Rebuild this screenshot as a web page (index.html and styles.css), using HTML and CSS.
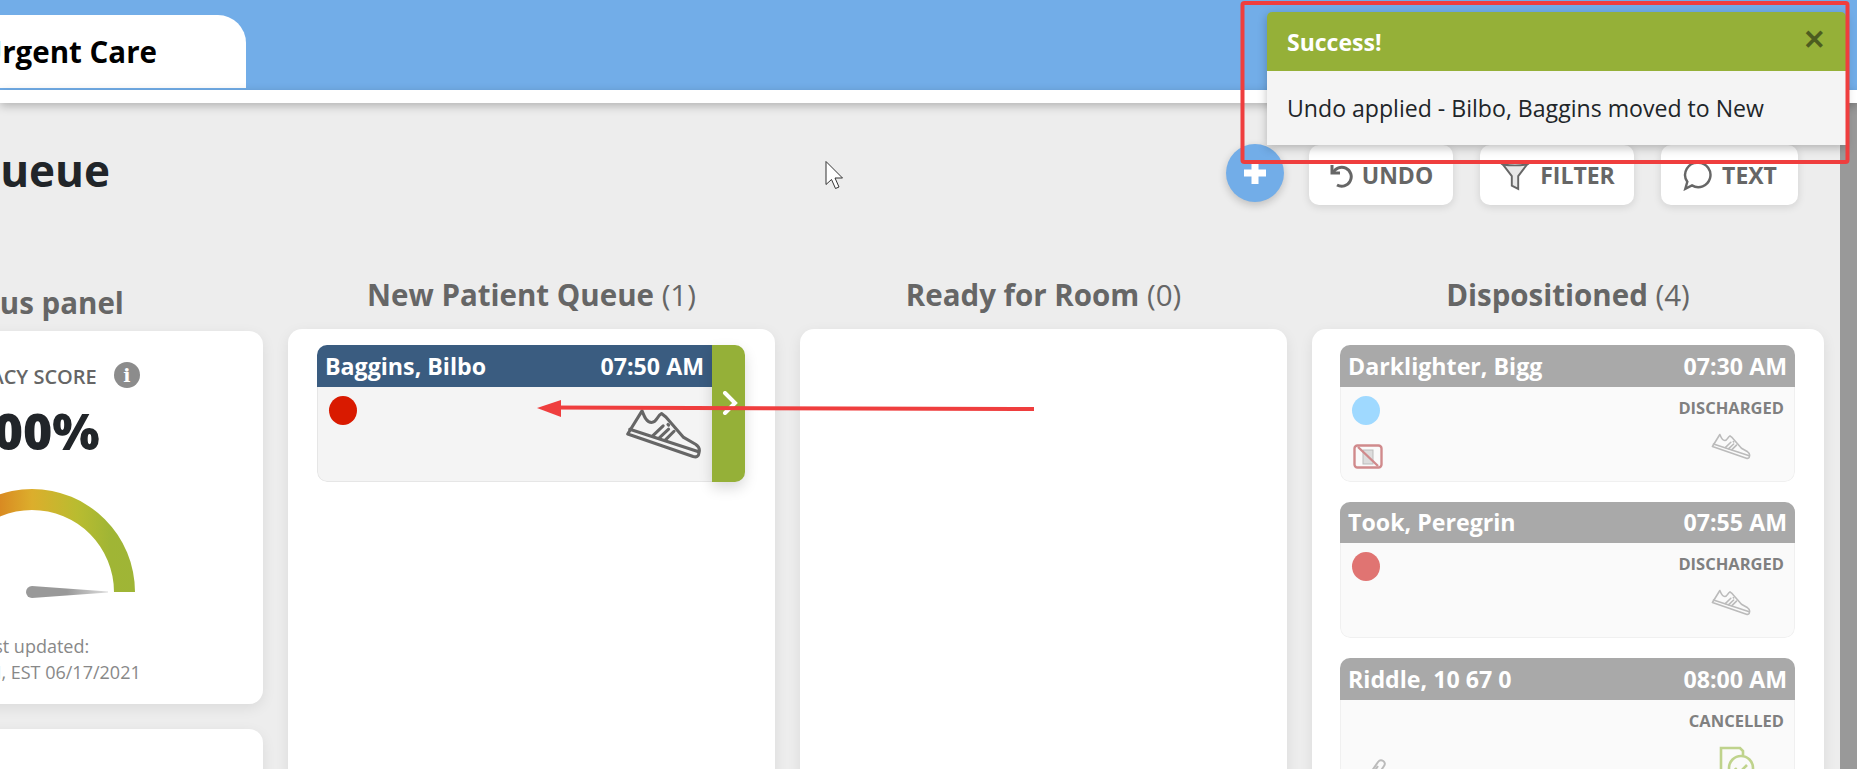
FILE: index.html
```html
<!DOCTYPE html>
<html lang="en">
<head>
    <meta charset="UTF-8">
    <meta name="viewport" content="width=device-width, initial-scale=1.0">
    <title>Patient Queue</title>
    <link rel="stylesheet" href="styles.css">
</head>
<body>
    <svg class="defs" width="0" height="0">
        <symbol id="shoe" viewBox="78 84 226 152">
            <g fill="none" stroke="currentColor" stroke-width="9" stroke-linejoin="round" stroke-linecap="round">
                <path d="M86 160 L128 92 C136 112 142 126 156 126 C172 126 172 106 185 100 L198 110 L250 170 L285 190 C296 197 298 206 295 216 C294 226 288 229 278 226 Z"/>
                <path d="M92 146 L294 212"/>
                <path d="M160 165 L190 136 M178 172 L206 146 M196 178 L222 152"/>
                <path d="M204 132 L206 134"/>
            </g>
        </symbol>
    </svg>

    <header class="topbar">
        <div class="tab">Urgent Care</div>
    </header>
    <div class="topbar-strip"></div>

    <div class="page">
        <main class="view">
            <div class="board">
                <div class="title-row">
                    <h1>Patient Queue</h1>
                    <div class="actions">
                        <button class="add-btn">
                            <svg width="26" height="26" viewBox="0 0 26 26"><path d="M13 2v22M2 13h22" stroke="#fff" stroke-width="7"/></svg>
                        </button>
                        <button class="btn btn-undo">
                            <svg width="24" height="26" viewBox="0 0 24 26" fill="none" stroke="#666" stroke-width="3"><path d="M3 3v8h8"/><path d="M4 11A9.500 9.500 0 1 1 8 23"/></svg>
                            UNDO
                        </button>
                        <button class="btn btn-filter">
                            <svg width="32" height="32" viewBox="0 0 30 30" fill="#e8e8e8" stroke="#666" stroke-width="1.800"><path d="M2 3h26L18 16v12l-6-3v-9z"/><ellipse cx="15" cy="4" rx="13" ry="2" fill="#fff"/></svg>
                            FILTER
                        </button>
                        <button class="btn btn-text">
                            <svg width="31" height="31" viewBox="0 0 28 28" fill="none" stroke="#666" stroke-width="2.200"><path d="M15 2.500a11 11 0 1 1-6 20.400L3 26l1.800-6.300A11 11 0 0 1 15 2.500z"/></svg>
                            TEXT
                        </button>
                    </div>
                </div>

                <div class="columns">
                    <section class="side">
                        <h2 class="side-head">Status panel</h2>
                        <div class="panel score-panel">
                            <div class="score-label">ACCURACY SCORE <span class="info">i</span></div>
                            <div class="score">100%</div>
                            <svg class="gauge" width="228" height="122" viewBox="0 0 228 122">
                                <defs>
                                    <linearGradient id="gaugeFill" x1="0" x2="1" y1="0" y2="0">
                                        <stop offset="0" stop-color="#d9261c"/>
                                        <stop offset="0.3" stop-color="#d8801f"/>
                                        <stop offset="0.5" stop-color="#dcae2c"/>
                                        <stop offset="0.72" stop-color="#b9bc30"/>
                                        <stop offset="0.88" stop-color="#a0b535"/>
                                        <stop offset="1" stop-color="#9fb536"/>
                                    </linearGradient>
                                    <linearGradient id="needleFill" x1="0" x2="1" y1="0" y2="0">
                                        <stop offset="0.5" stop-color="#999"/>
                                        <stop offset="1" stop-color="#ddd"/>
                                    </linearGradient>
                                </defs>
                                <path d="M11 114A103 103 0 0 1 217 114h-21A82 82 0 0 0 32 114z" fill="url(#gaugeFill)"/>
                                <path d="M114 108L190 113.500v1L114 120a6 6 0 0 1 0-12z" fill="url(#needleFill)"/>
                            </svg>
                            <div class="updated">Last updated:<br>07:50 AM, EST 06/17/2021</div>
                        </div>
                        <div class="panel next-panel"></div>
                    </section>

                    <section class="col">
                        <h2 class="col-head"><b>New Patient Queue</b> (1)</h2>
                        <div class="panel col-body col-new">
                            <div class="card active">
                                <div class="card-main">
                                    <div class="card-head"><span>Baggins, Bilbo</span><span>07:50 AM</span></div>
                                    <div class="card-body">
                                        <div class="card-left"><span class="dot dot-red"></span></div>
                                        <div class="card-right">
                                            <svg class="shoe-big"><use href="#shoe"/></svg>
                                        </div>
                                    </div>
                                </div>
                                <div class="card-next">
                                    <svg width="16" height="24" viewBox="0 0 16 24" fill="none" stroke="#fff" stroke-width="4" stroke-linecap="round"><path d="M3 2l10 10L3 22"/></svg>
                                </div>
                            </div>
                        </div>
                    </section>

                    <section class="col">
                        <h2 class="col-head"><b>Ready for Room</b> (0)</h2>
                        <div class="panel col-body"></div>
                    </section>

                    <section class="col">
                        <h2 class="col-head"><b>Dispositioned</b> (4)</h2>
                        <div class="panel col-body col-done">
                            <div class="card done">
                                <div class="card-main">
                                    <div class="card-head"><span>Darklighter, Bigg</span><span>07:30 AM</span></div>
                                    <div class="card-body">
                                        <div class="card-left">
                                            <span class="dot dot-blue"></span>
                                            <svg class="flag-icon" width="30" height="25" viewBox="0 0 30 25"><rect x="1.500" y="1.500" width="27" height="22" rx="3" fill="none" stroke="#d08a8c" stroke-width="2.400"/><rect x="10" y="6" width="10" height="14" fill="#ddd" stroke="#bbb"/><path d="M5 3l20 19" stroke="#d08a8c" stroke-width="2.400"/></svg>
                                        </div>
                                        <div class="card-right">
                                            <div class="state">DISCHARGED</div>
                                            <svg class="shoe-small"><use href="#shoe"/></svg>
                                        </div>
                                    </div>
                                </div>
                            </div>
                            <div class="card done">
                                <div class="card-main">
                                    <div class="card-head"><span>Took, Peregrin</span><span>07:55 AM</span></div>
                                    <div class="card-body">
                                        <div class="card-left"><span class="dot dot-pink"></span></div>
                                        <div class="card-right">
                                            <div class="state">DISCHARGED</div>
                                            <svg class="shoe-small"><use href="#shoe"/></svg>
                                        </div>
                                    </div>
                                </div>
                            </div>
                            <div class="card done">
                                <div class="card-main">
                                    <div class="card-head"><span>Riddle, 10 67 0</span><span>08:00 AM</span></div>
                                    <div class="card-body">
                                        <div class="card-left">
                                            <svg class="clip-icon" width="26" height="34" viewBox="0 0 26 34" fill="none" stroke="#bbb" stroke-width="2"><path d="M3 24L16 5c3-4 9 0 6 4L9 28c-2 3-6 0-4-3l11-16"/></svg>
                                        </div>
                                        <div class="card-right">
                                            <div class="state">CANCELLED</div>
                                            <svg class="doc-icon" width="36" height="40" viewBox="0 0 36 40" fill="none" stroke="#bfd38c" stroke-width="2.600"><path d="M13 30H2V2h19l3 3v4"/><circle cx="22" cy="22" r="12"/><path d="M16 22l4 5 8-8"/></svg>
                                        </div>
                                    </div>
                                </div>
                            </div>
                        </div>
                    </section>
                </div>
            </div>
        </main>
        <div class="scrollbar"></div>
    </div>

    <div class="toast">
        <div class="toast-head"><span>Success!</span><span class="toast-close">✕</span></div>
        <div class="toast-body">Undo applied - Bilbo, Baggins moved to New</div>
    </div>

    <!-- marks drawn on top of the screenshot -->
    <svg class="marks" width="1857" height="769" viewBox="0 0 1857 769">
        <rect x="1242.500" y="3" width="605" height="159" rx="2" fill="none" stroke="#ef3e3e" stroke-width="4"/>
        <path d="M1034 409L550 407.500" stroke="#ef3e3e" stroke-width="4" fill="none"/>
        <path d="M537 408L561 400v17z" fill="#ef3e3e"/>
        <path d="M826 161.500v23l5.500-5 4 9 3.500-1.500-4-9h7.500z" fill="#fff" stroke="#333" stroke-width="1"/>
    </svg>
</body>
</html>
```

FILE: styles.css
```css
* { box-sizing: border-box; }
html, body { height: 100%; }
body { margin: 0; overflow: hidden; font-family: "Open Sans", sans-serif; background: #ededed; color: #212529; }
.defs { position: absolute; }

.topbar { height: 90px; background: #72ade8; padding-top: 15px; overflow: hidden; }
.tab { width: 246px; height: 74px; background: #fff; border-radius: 0 28px 0 0; display: flex; justify-content: flex-end; align-items: center; padding-right: 89px; font-size: 29.5px; font-weight: 700; color: #000; white-space: nowrap; border-bottom: 1px solid #72ade8; }
.topbar-strip { height: 13px; background: #fff; box-shadow: 0 3px 10px rgba(0, 0, 0, 0.25); position: relative; }

.page { display: flex; height: 666px; }
.view { flex: 1; overflow: hidden; }
.scrollbar { width: 17px; background: #999; }
.board { margin-left: -199px; width: 2023px; }

.title-row { display: flex; justify-content: space-between; align-items: center; margin-top: 42px; height: 60px; padding-right: 26px; }
h1 { margin: -10px 0 0 -8px; font-size: 44px; font-weight: 700; color: #212529; white-space: nowrap; }
.actions { display: flex; align-items: center; }
.add-btn { width: 58px; height: 58px; border: none; border-radius: 50%; background: #72ade8; box-shadow: 0 3px 8px rgba(0, 0, 0, 0.2); margin: -4px 25px 0 0; padding: 0; display: flex; align-items: center; justify-content: center; }
.btn { height: 60px; border: none; background: #fff; border-radius: 10px; box-shadow: 0 2px 8px rgba(0, 0, 0, 0.12); font-family: inherit; font-size: 23px; font-weight: 700; color: #666; display: flex; align-items: center; justify-content: center; gap: 9px; margin-right: 27px; padding: 0; }
.btn:last-child { margin-right: 0; }
.btn-undo { width: 144px; }
.btn-filter { width: 154px; }
.btn-text { width: 137px; }

.columns { display: grid; grid-template-columns: 462px 487px 487px 512px; column-gap: 25px; margin-top: 70px; }
.side-head, .col-head { margin: 0; font-size: 29.5px; line-height: 40px; text-align: center; color: #666; font-weight: 400; }
.side-head { font-weight: 700; margin-top: 8px; margin-bottom: 8px; }
.col-head { margin-bottom: 14px; }
.panel { background: #fff; border-radius: 14px; box-shadow: 0 4px 14px rgba(0, 0, 0, 0.08); }
.col-body { height: 520px; padding: 16px 29px; }
.col-new { padding-right: 30px; }
.col-done { padding-left: 28px; }

.score-panel { height: 373px; text-align: center; padding-top: 31px; }
.next-panel { height: 120px; margin-top: 25px; }
.score-label { font-size: 20px; font-weight: 600; color: #666; line-height: 30px; display: flex; justify-content: center; align-items: center; gap: 17px; }
.info { width: 26px; height: 26px; border-radius: 50%; background: #8c8c8c; color: #fff; font-family: "DejaVu Serif", serif; font-size: 19px; font-weight: 700; line-height: 26px; margin-top: -4px; }
.score { font-size: 50px; font-weight: 800; line-height: 66px; margin-top: 6px; }
.gauge { display: block; margin: 14px auto 0; }
.updated { font-size: 18px; line-height: 26px; color: #888; margin-top: 33px; }

.card { display: flex; height: 136.5px; margin-bottom: 20px; border-radius: 10px; }
.card-main { flex: 1; display: flex; flex-direction: column; min-width: 0; border-radius: 10px 0 0 10px; overflow: hidden; }
.card-head { height: 41.5px; flex: none; display: flex; justify-content: space-between; align-items: center; padding: 0 8px 0 8px; color: #fff; font-size: 23.2px; font-weight: 700; }
.card-body { flex: 1; display: flex; justify-content: space-between; padding: 9px 10px 9px 11px; border: 1px solid #e6e6e6; border-top: none; }
.card-left { display: flex; flex-direction: column; align-items: flex-start; }
.card-right { display: flex; flex-direction: column; align-items: flex-end; }

.active .card-head { background: #3a5c80; }
.active .card-body { background: #f4f4f4; border-radius: 0 0 0 10px; border-right: none; padding-right: 10px; padding-left: 11px; }
.active .card-main { border-radius: 10px 0 0 10px; }
.active .card-right { padding-top: 12px; }
.card-next { width: 33px; background: #95b038; border-radius: 0 10px 10px 0; display: flex; align-items: center; justify-content: flex-end; padding: 0 7px 21px 0; box-shadow: 0 6px 14px rgba(0, 0, 0, 0.15); }
.shoe-big { width: 77px; height: 52px; color: #666; }

.done .card-main { border-radius: 10px; }
.done .card-head { background: #a9a9a9; }
.done .card-body { background: #fafafa; border-color: #f0f0f0; border-radius: 0 0 10px 10px; }
.state { font-size: 16.5px; font-weight: 700; color: #808080; line-height: 22px; margin-top: 1px; }
.shoe-small { width: 40px; height: 27px; color: #bbb; margin: 14px 33px 0 0; }
.doc-icon { margin: 14px 29px 0 0; }
.clip-icon { margin: 48px 0 0 10px; }
.flag-icon { margin: 19px 0 0 1px; }

.dot { width: 28px; height: 29px; border-radius: 50%; }
.dot-red { background: #d91a00; }
.dot-blue { background: #9fd9ff; }
.dot-pink { background: #e07472; }

.toast { position: absolute; left: 1267px; top: 12px; width: 579px; box-shadow: 0 3px 10px rgba(0, 0, 0, 0.25); border-radius: 5px 5px 0 0; overflow: hidden; }
.toast-head { height: 59px; background: #95b038; color: #fff; font-size: 23px; font-weight: 700; display: flex; justify-content: space-between; align-items: center; padding: 0 20px; }
.toast-close { color: #4d5c20; font-size: 27px; font-weight: 700; margin: -7px 0 0 0; }
.toast-body { height: 74px; background: #f4f4f4; color: #212529; font-size: 23.1px; padding-left: 20px; display: flex; align-items: center; }

.marks { position: absolute; left: 0; top: 0; pointer-events: none; }
```
